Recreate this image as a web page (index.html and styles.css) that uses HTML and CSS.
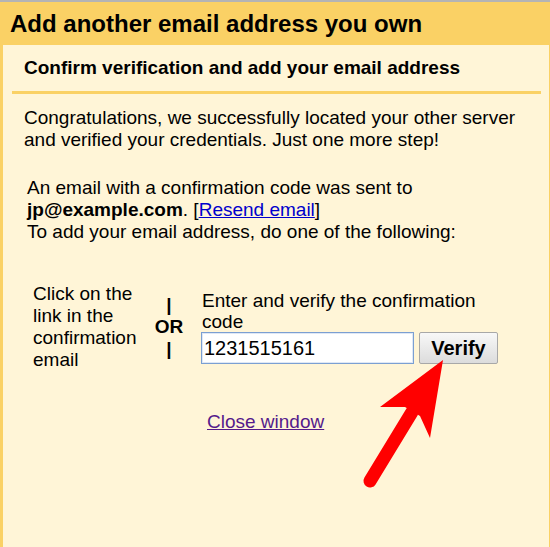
FILE: index.html
```html
<!DOCTYPE html>
<html>
<head>
<meta charset="utf-8">
<link rel="stylesheet" href="styles.css">
</head>
<body>
<div class="window">
  <h1 class="title">Add another email address you own</h1>
  <div class="panel">
    <div class="subhead">Confirm verification and add your email address</div>
    <div class="rule"></div>
    <p class="intro">Congratulations, we successfully located your other server and verified your credentials. Just one more step!</p>
    <p class="sent">An email with a confirmation code was sent to <b>jp@example.com</b>. [<a href="#" class="resend">Resend email</a>]<br>To add your email address, do one of the following:</p>
    <div class="options">
      <div class="opt-left">Click on the link in the confirmation email</div>
      <div class="opt-or"><span>|</span><span>OR</span><span>|</span></div>
      <div class="opt-right">
        <div class="opt-label">Enter and verify the confirmation code</div>
        <div class="opt-form">
          <input class="code" type="text" value="1231515161">
          <button class="verify">Verify</button>
        </div>
      </div>
    </div>
    <div class="close"><a href="#" class="close-link">Close window</a></div>
    <svg class="arrow" width="550" height="547" viewBox="0 0 550 547">
      <line x1="370" y1="481" x2="412" y2="412" stroke="#ff0000" stroke-width="13" stroke-linecap="round"/>
      <polygon points="443,360 380,407 405,407 420,416 430,438" fill="#ff0000"/>
    </svg>
  </div>
</div>
</body>
</html>
```

FILE: styles.css
```css
html, body {
  margin: 0;
  padding: 0;
}
body {
  font-family: "Liberation Sans", Arial, sans-serif;
  color: #000;
  background: #fff;
}
.window {
  width: 546px;
  height: 545px;
  border-top: 2px solid #b4b4b4;
  border-right: 1px solid #c8c8c8;
  background: #fad165;
  padding: 0 4px 0 3px;
  display: flex;
  flex-direction: column;
}
.title {
  margin: 0;
  height: 43px;
  box-sizing: border-box;
  padding: 8px 0 0 7px;
  font-size: 24px;
  font-weight: bold;
  line-height: 28px;
}
.panel {
  flex: 1;
  background: #fff5d7;
  padding: 0 8px 0 9px;
}
.subhead {
  font-size: 19px;
  font-weight: bold;
  padding: 12px 0 0 12px;
  height: 34px;
  line-height: 22px;
}
.rule {
  height: 3px;
  background: #fad165;
}
.intro {
  margin: 0;
  padding: 13px 0 0 12px;
  font-size: 19px;
  line-height: 22px;
}
.sent {
  margin: 0;
  padding: 26px 0 0 15px;
  font-size: 19px;
  line-height: 22px;
}
.resend {
  color: #0000cc;
}
.options {
  display: flex;
  align-items: center;
  padding: 40px 0 0 21px;
  font-size: 19px;
  line-height: 22px;
}
.opt-left {
  width: 112px;
}
.opt-or {
  width: 46px;
  display: flex;
  flex-direction: column;
  align-items: center;
  font-weight: bold;
  font-size: 19px;
  line-height: 22px;
  margin-left: 1px;
}
.opt-right {
  width: 300px;
  margin-left: 10px;
}
.opt-label {
  width: 296px;
  line-height: 21px;
}
.opt-form {
  display: flex;
  gap: 5px;
  margin-top: 0;
}
.code {
  width: 213px;
  height: 32px;
  box-sizing: border-box;
  border: 1px solid #7b9fd2;
  box-shadow: inset 0 0 0 1px #dfe8f5;
  background: #fff;
  font-family: "Liberation Sans", Arial, sans-serif;
  font-size: 20px;
  padding: 0 2px;
  margin: 0 0 0 -1px;
}
.verify {
  width: 79px;
  height: 32px;
  box-sizing: border-box;
  border: 1px solid #a8a8a8;
  border-radius: 2px;
  background: linear-gradient(#f8f8f8, #dcdcdc);
  font-family: "Liberation Sans", Arial, sans-serif;
  font-size: 20px;
  font-weight: bold;
  padding: 0;
  margin: 0;
}
.close {
  padding: 40px 0 0 195px;
  font-size: 19px;
}
.close-link {
  color: #551a8b;
}
.arrow {
  position: absolute;
  left: 0;
  top: 0;
  pointer-events: none;
}
```
